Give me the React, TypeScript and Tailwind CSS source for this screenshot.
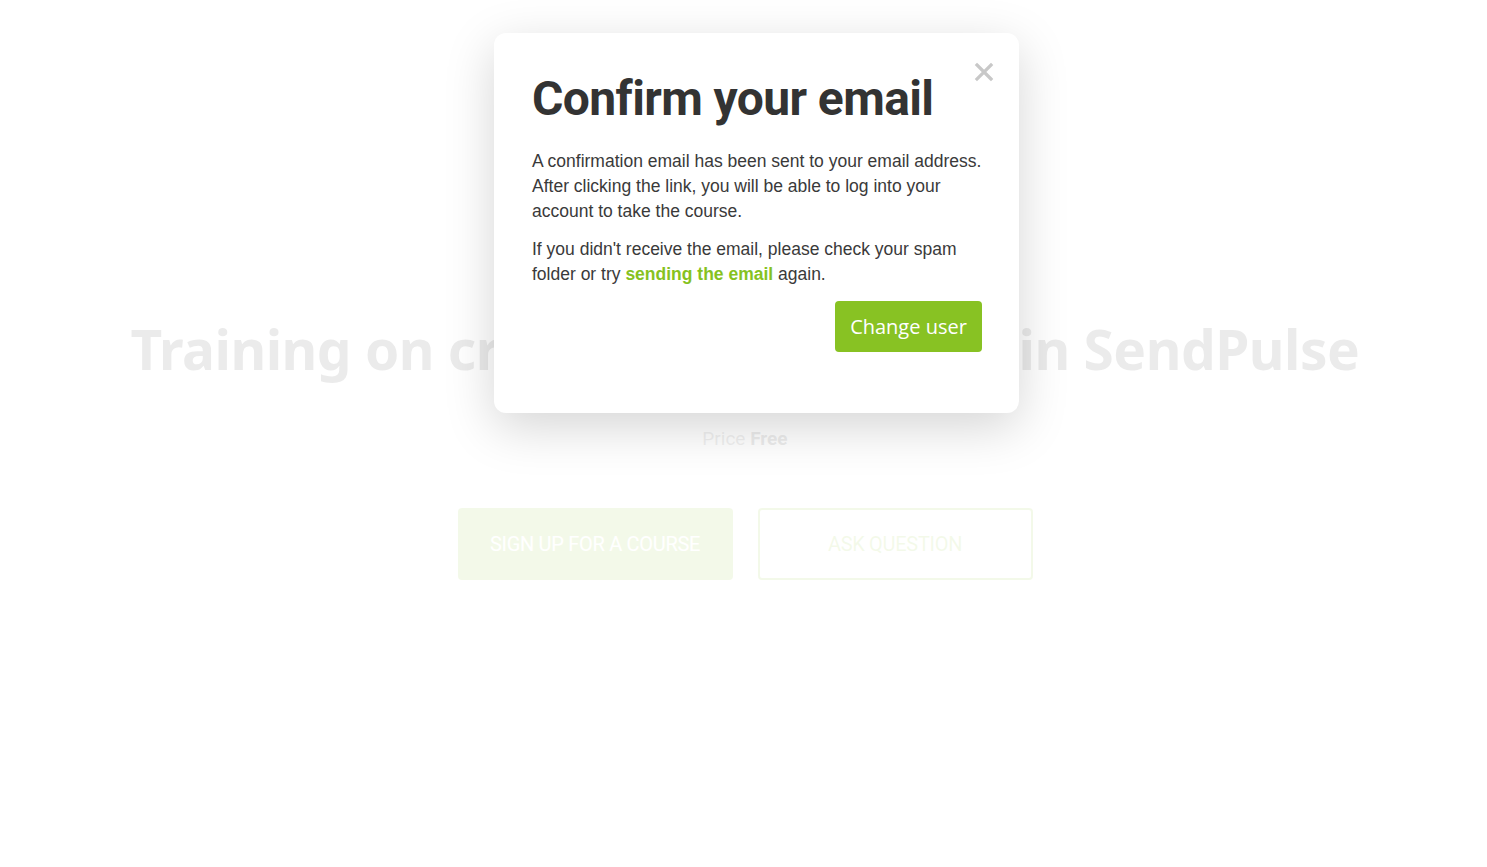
import React from 'react';

const CourseHeader: React.FC = () => {
  return (
    <div className="flex flex-col items-center pt-[314px] pl-[3px]">
      <h1 className="text-[55px] leading-[70px] font-bold text-[#333333] tracking-[-0.5px] whitespace-nowrap [font-family:'Noto_Sans',Roboto,sans-serif]">
        Training on creating newsletters in SendPulse
      </h1>
      <p className="mt-[41px] text-[19px] text-[#6d6d6d] [font-family:Roboto,'Noto_Sans',sans-serif]">
        Price <span className="font-bold text-[#444]">Free</span>
      </p>
      <div className="mt-[54px] flex gap-[25px]">
        <button className="w-[275px] h-[72px] rounded-[4px] bg-[#8bc425] text-white text-[20px] uppercase tracking-[-0.3px] [font-family:Roboto,sans-serif]">
          Sign up for a course
        </button>
        <button className="w-[275px] h-[72px] rounded-[4px] border-2 border-[#8bc425] text-[#8bc425] text-[20px] uppercase tracking-[-0.3px] [font-family:Roboto,sans-serif]">
          Ask question
        </button>
      </div>
    </div>
  );
};

const ConfirmModal: React.FC = () => {
  return (
    <div className="relative w-[525px] h-[380px] bg-white rounded-[12px] shadow-[0_14px_50px_rgba(0,0,0,0.17)] pl-[38px] pr-[24px] pt-[38px]">
      <button className="absolute right-[24px] top-[28px] w-[22px] h-[22px] flex items-center justify-center">
        <svg width="20" height="20" viewBox="0 0 20 20" fill="none">
          <path d="M3 3L17 17M17 3L3 17" stroke="#c8c8c8" strokeWidth="3.2" strokeLinecap="square" />
        </svg>
      </button>
      <h2 className="text-[48px] leading-[56px] font-bold text-[#333333] tracking-[-0.6px] [font-family:Roboto,'Noto_Sans',sans-serif]">
        Confirm your email
      </h2>
      <div className="mt-[22px] text-[17.5px] leading-[25px] text-[#3a3a3a] [font-family:'Liberation_Sans',Arial,sans-serif]">
        <p>
          A confirmation email has been sent to your email address. After clicking the link, you will be able to log into your account to take the course.
        </p>
        <p className="mt-[13px] pr-[20px]">
          If you didn't receive the email, please check your spam folder or try{' '}
          <a className="font-bold text-[#86c21f] cursor-pointer">sending the email</a> again.
        </p>
      </div>
      <div className="mt-[14px] pr-[13px] flex justify-end">
        <button className="w-[147px] h-[51px] rounded-[4px] bg-[#88c223] text-white text-[20px] [font-family:'Open_Sans',sans-serif]">
          Change user
        </button>
      </div>
    </div>
  );
};

export default function App() {
  return (
    <div className="relative w-full h-[867px] bg-white overflow-hidden">
      <CourseHeader />
      <div className="absolute inset-0 bg-white/90" />
      <div className="absolute left-[494px] top-[33px]">
        <ConfirmModal />
      </div>
    </div>
  );
}
